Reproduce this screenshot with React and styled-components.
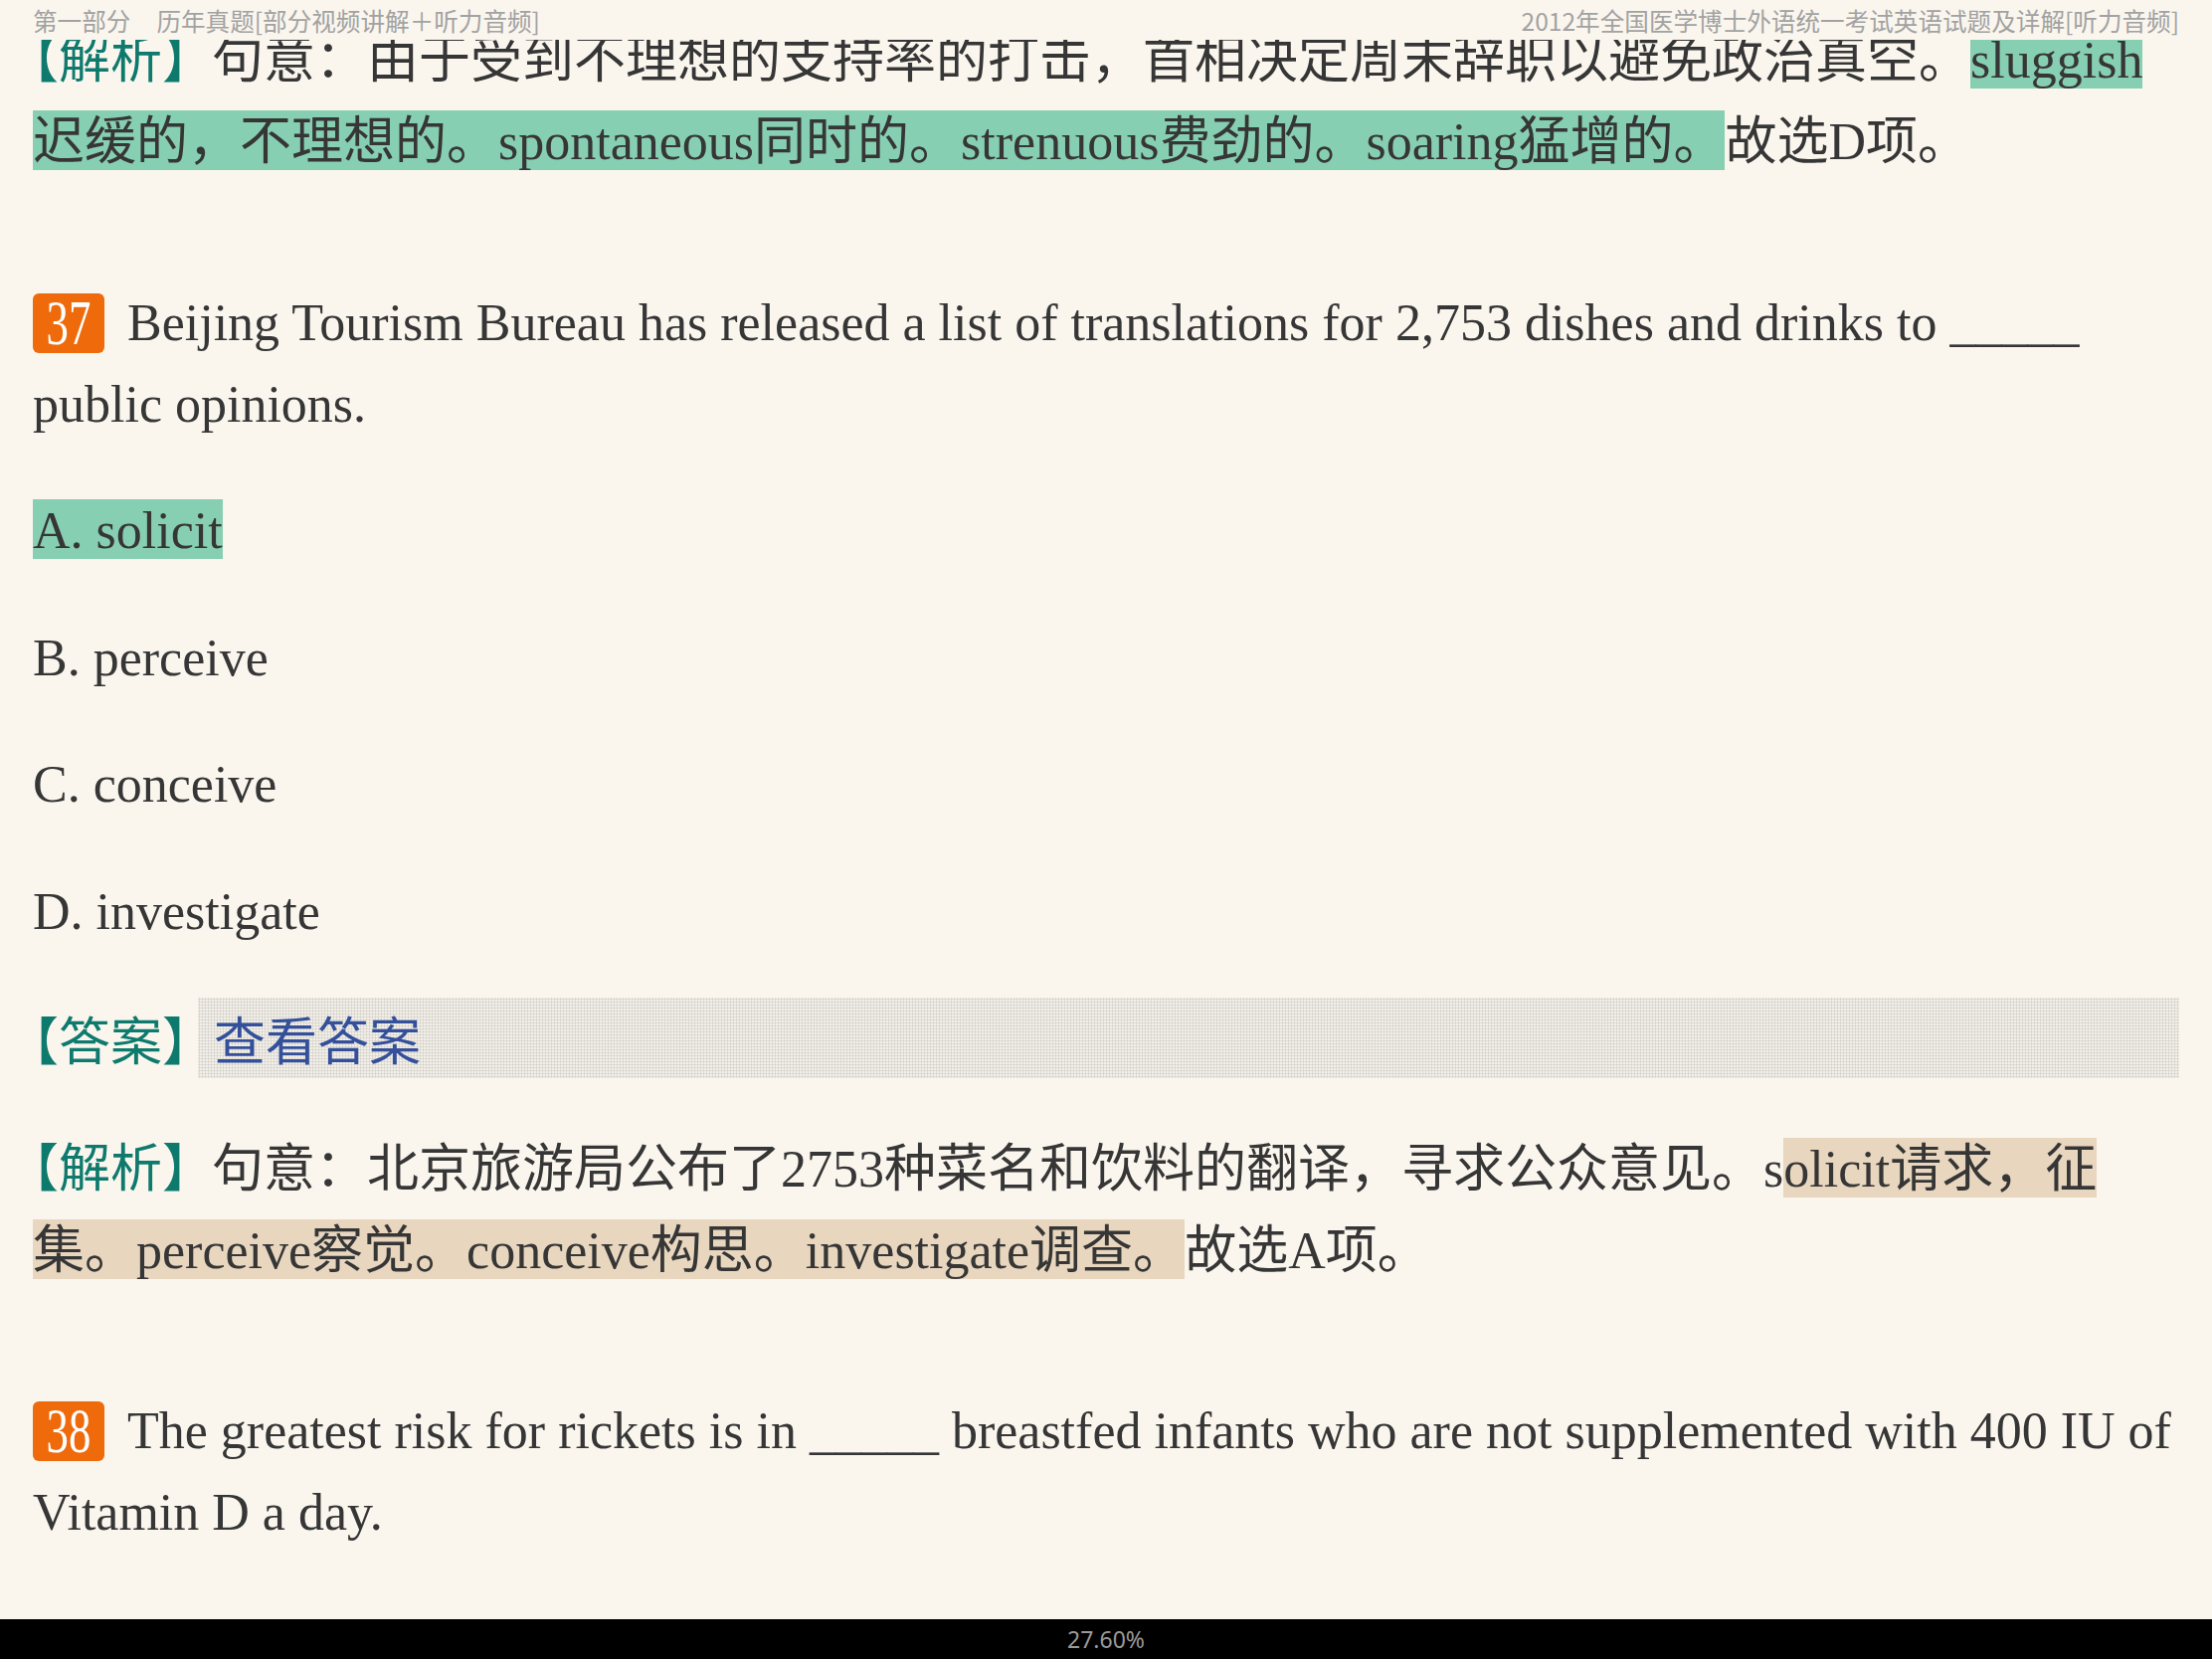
import React from "react";
import styled, { createGlobalStyle } from "styled-components";

const GlobalStyle = createGlobalStyle`
  html, body {
    margin: 0;
    padding: 0;
    background: #faf6ee;
  }
  body {
    font-family: "Liberation Serif", "Noto Sans CJK SC", serif;
  }
`;

const Page = styled.div`
  height: 100vh;
  display: flex;
  flex-direction: column;
  background: #faf6ee;
  overflow: hidden;
`;

const Header = styled.header`
  flex: 0 0 40px;
  display: flex;
  align-items: center;
  justify-content: space-between;
  padding: 0 33px;
  font-family: "Noto Sans CJK SC", "Noto Sans", sans-serif;
  font-size: 24.6px;
  line-height: 40px;
  color: #a2a2a2;
  white-space: nowrap;
  position: relative;
  z-index: 1;
  background: #faf6ee;
`;

const HeaderGroup = styled.div`
  display: flex;
  gap: 26px;
`;

const Viewport = styled.main`
  flex: 1 1 auto;
  overflow: hidden;
`;

const Content = styled.div`
  margin-top: -25px;
  padding: 0 33px;
  display: flex;
  flex-direction: column;
  gap: 45.5px;
`;

const Para = styled.p`
  margin: 0 0 ${(p) => (p.$section ? "54px" : "0")};
  font-size: 52px;
  line-height: 82px;
  color: #363636;
`;

const Label = styled.span`
  font-family: "Noto Sans CJK SC", sans-serif;
  font-feature-settings: "halt" 1;
  color: #0e7a6d;
  margin-right: ${(p) => p.$gap || "24px"};
`;

const Mark = styled.span`
  background: ${(p) => (p.$tone === "tan" ? "#e8d6bf" : "#87cfb2")};
  padding-top: 3px;
`;

const Badge = styled.span`
  display: inline-block;
  width: 72px;
  height: 60px;
  margin-right: 23px;
  border-radius: 6px;
  background: #ef6a0b;
  color: #ffffff;
  text-align: center;
  font-size: 64px;
  line-height: 60px;
  vertical-align: -4px;
`;

const BadgeNum = styled.span`
  display: inline-block;
  transform: scaleX(0.7);
`;

const AnswerRow = styled.div`
  display: flex;
  height: 81px;
  font-size: 52px;
  line-height: 81px;
  color: #363636;
`;

const DotBox = styled.div`
  flex: 1 1 auto;
  padding-left: 16px;
  font-family: "Noto Sans CJK SC", sans-serif;
  color: #34509a;
  background-color: #f3f0ea;
  background-image: radial-gradient(circle, #d4d1cb 0.9px, transparent 1.2px);
  background-size: 3px 3px;
`;

const Footer = styled.footer`
  flex: 0 0 40px;
  display: flex;
  align-items: center;
  justify-content: center;
  background: #000000;
  color: #9a9a9a;
  font-family: "Noto Sans", "Liberation Sans", sans-serif;
  font-size: 23px;
  position: relative;
  z-index: 1;
`;

const options = [
  { key: "A", text: "A. solicit", chosen: true },
  { key: "B", text: "B. perceive" },
  { key: "C", text: "C. conceive" },
  { key: "D", text: "D. investigate" },
];

export default function App() {
  return (
    <>
      <GlobalStyle />
      <Page>
        <Header>
          <HeaderGroup>
            <span>第一部分</span>
            <span>历年真题[部分视频讲解＋听力音频]</span>
          </HeaderGroup>
          <span>2012年全国医学博士外语统一考试英语试题及详解[听力音频]</span>
        </Header>
        <Viewport>
          <Content>
            <Para $section>
              <Label>【解析】</Label>
              句意：由于受到不理想的支持率的打击，首相决定周末辞职以避免政治真空。
              <Mark>
                sluggish迟缓的，不理想的。spontaneous同时的。strenuous费劲的。soaring猛增的。
              </Mark>
              故选D项。
            </Para>

            <Para>
              <Badge>
                <BadgeNum>37</BadgeNum>
              </Badge>
              Beijing Tourism Bureau has released a list of translations for 2,753 dishes and drinks to _____ public opinions.
            </Para>

            {options.map((o) => (
              <Para key={o.key}>{o.chosen ? <Mark>{o.text}</Mark> : o.text}</Para>
            ))}

            <AnswerRow>
              <Label $gap="10px">【答案】</Label>
              <DotBox>查看答案</DotBox>
            </AnswerRow>

            <Para $section>
              <Label>【解析】</Label>
              句意：北京旅游局公布了2753种菜名和饮料的翻译，寻求公众意见。s
              <Mark $tone="tan">
                olicit请求，征集。perceive察觉。conceive构思。investigate调查。
              </Mark>
              故选A项。
            </Para>

            <Para>
              <Badge>
                <BadgeNum>38</BadgeNum>
              </Badge>
              The greatest risk for rickets is in _____ breastfed infants who are not supplemented with 400 IU of Vitamin D a day.
            </Para>
          </Content>
        </Viewport>
        <Footer>27.60%</Footer>
      </Page>
    </>
  );
}
